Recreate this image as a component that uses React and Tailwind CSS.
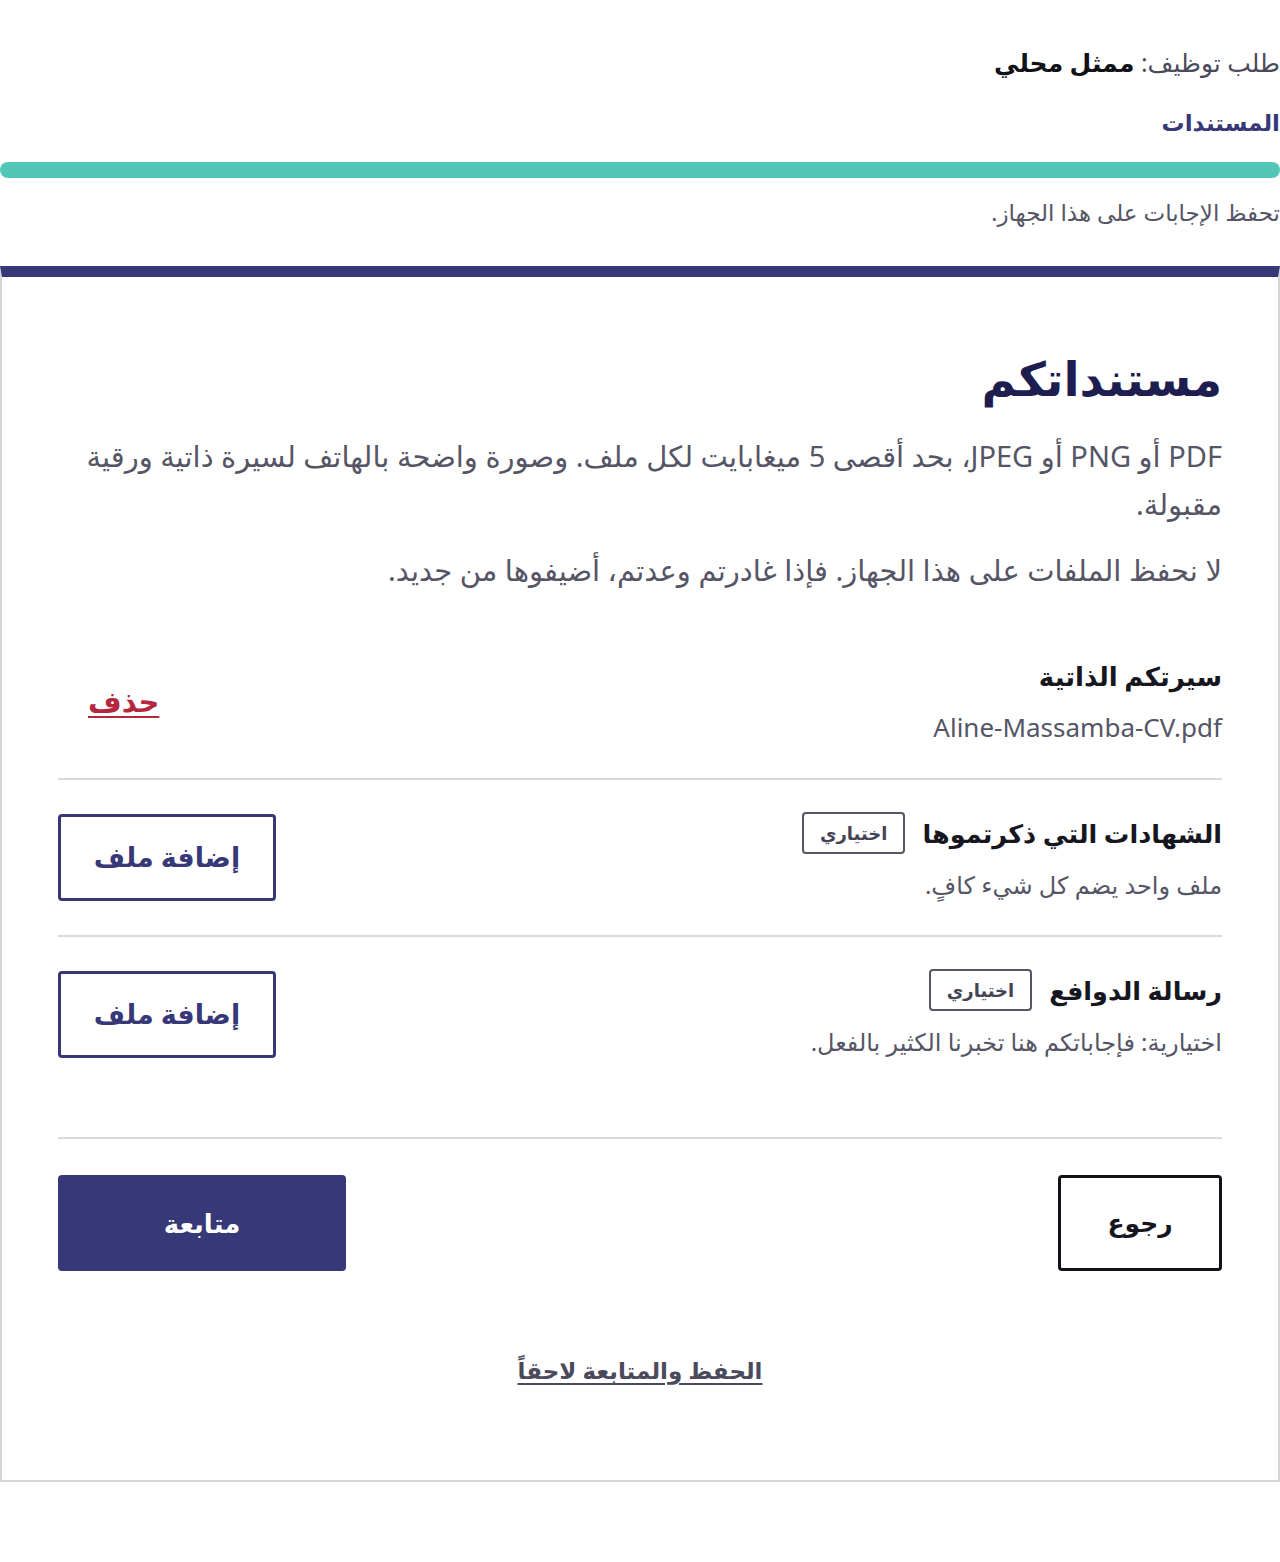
import React from "react";

function Badge() {
  return (
    <span className="inline-flex items-center border-2 border-[#555566] rounded px-4 h-[42px] text-[18px] font-semibold text-[#444455]">
      اختياري
    </span>
  );
}

function AddFileButton() {
  return (
    <button className="w-[218px] h-[87px] border-[3px] border-[#363877] rounded text-[#363877] text-[27px] font-bold bg-white">
      إضافة ملف
    </button>
  );
}

function DocRow({ title, hint, last }) {
  return (
    <div
      className={
        last
          ? "flex items-center justify-between pt-[32px] pb-[32px]"
          : "flex items-center justify-between py-[32px] border-b-2 border-[#dadad6]"
      }
    >
      <div className="flex flex-col gap-[13px]">
        <div className="flex items-center gap-[17px]">
          <h3 className="text-[25.5px] leading-[42px] font-bold text-[#16161f]">{title}</h3>
          <Badge />
        </div>
        <p className="text-[24px] leading-[36px] text-[#555566]">{hint}</p>
      </div>
      <AddFileButton />
    </div>
  );
}

export default function App() {
  return (
    <div
      dir="rtl"
      className="w-[1280px] min-h-[1562px] bg-white text-[#16161f]"
      style={{ fontFamily: '"Noto Sans", "DejaVu Sans", sans-serif' }}
    >
      {/* header */}
      <div className="pt-[40px]">
        <p className="text-[25px] text-[#4a4a5c] leading-[44px]">
          طلب توظيف: <span className="font-bold text-[#111118]">ممثل محلي</span>
        </p>
        <p className="mt-[20px] text-[23px] leading-[36px] font-bold text-[#363877]">المستندات</p>
        <div className="mt-[22px] h-[16px] rounded-full bg-[#52c7b7]" />
        <p className="mt-[16px] text-[23px] leading-[36px] text-[#555566]">تحفظ الإجابات على هذا الجهاز.</p>
      </div>

      {/* card */}
      <div className="mt-[36px] border-t-[11px] border-t-[#363877] border-x-2 border-b-2 border-x-[#d6d6d6] border-b-[#d6d6d6] px-[56px] pt-[65px] pb-[87px]">
        <h1 className="text-[47px] font-bold text-[#1d1d4f] leading-[72px]">مستنداتكم</h1>
        <p className="mt-[18px] text-[29px] leading-[48px] text-[#555566]">
          PDF أو PNG أو JPEG، بحد أقصى 5 ميغابايت لكل ملف. وصورة واضحة بالهاتف لسيرة ذاتية ورقية مقبولة.
        </p>
        <p className="mt-[18px] text-[29px] leading-[48px] text-[#555566]">
          لا نحفظ الملفات على هذا الجهاز. فإذا غادرتم وعدتم، أضيفوها من جديد.
        </p>

        <div className="mt-[62px] flex items-center justify-between pb-[33px] border-b-2 border-[#dadad6]">
          <div className="flex flex-col gap-[13px]">
            <h3 className="text-[26px] leading-[40px] font-bold text-[#16161f]">سيرتكم الذاتية</h3>
            <p dir="ltr" className="text-[26px] leading-[36px] text-[#555566] text-right">
              Aline-Massamba-CV.pdf
            </p>
          </div>
          <a href="#" className="ml-[30px] text-[29px] font-bold text-[#b3283e] underline underline-offset-4">
            حذف
          </a>
        </div>

        <DocRow title="الشهادات التي ذكرتموها" hint="ملف واحد يضم كل شيء كافٍ." />
        <DocRow title="رسالة الدوافع" hint="اختيارية: فإجاباتكم هنا تخبرنا الكثير بالفعل." last />

        <div className="mt-[45px] flex items-center justify-between pt-[36px] border-t-2 border-[#dadad6]">
          <button className="w-[164px] h-[96px] border-[3px] border-[#111118] rounded text-[25px] font-bold bg-white">
            رجوع
          </button>
          <button className="w-[288px] h-[96px] rounded bg-[#363877] text-white text-[26px] font-bold">
            متابعة
          </button>
        </div>

        <div className="mt-[79px] text-center leading-[40px]">
          <a href="#" className="text-[23px] font-bold text-[#4a4a5c] underline underline-offset-4">
            الحفظ والمتابعة لاحقاً
          </a>
        </div>
      </div>
    </div>
  );
}
